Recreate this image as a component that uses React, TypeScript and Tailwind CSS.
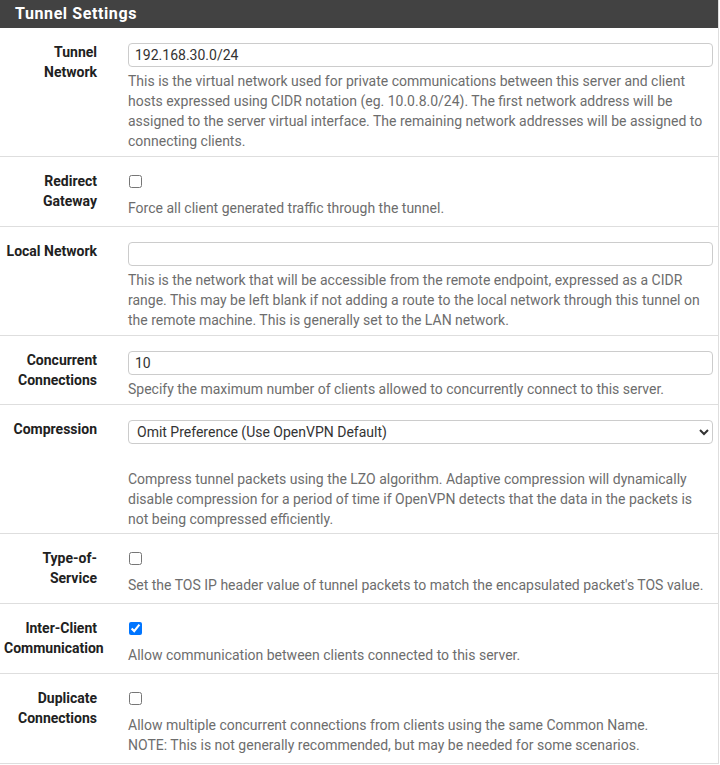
import { useState } from 'react';

type Row =
  | { kind: 'input'; label: string; value: string; help: string[] }
  | { kind: 'check'; label: string; checked: boolean; help: string[] }
  | { kind: 'select'; label: string; value: string; help: string[] };

const rows: Row[] = [
  {
    kind: 'input',
    label: 'Tunnel Network',
    value: '192.168.30.0/24',
    help: [
      'This is the virtual network used for private communications between this server and client hosts expressed using CIDR notation (eg. 10.0.8.0/24). The first network address will be assigned to the server virtual interface. The remaining network addresses will be assigned to connecting clients.',
    ],
  },
  {
    kind: 'check',
    label: 'Redirect Gateway',
    checked: false,
    help: ['Force all client generated traffic through the tunnel.'],
  },
  {
    kind: 'input',
    label: 'Local Network',
    value: '',
    help: [
      'This is the network that will be accessible from the remote endpoint, expressed as a CIDR range. This may be left blank if not adding a route to the local network through this tunnel on the remote machine. This is generally set to the LAN network.',
    ],
  },
  {
    kind: 'input',
    label: 'Concurrent Connections',
    value: '10',
    help: ['Specify the maximum number of clients allowed to concurrently connect to this server.'],
  },
  {
    kind: 'select',
    label: 'Compression',
    value: 'Omit Preference (Use OpenVPN Default)',
    help: [
      'Compress tunnel packets using the LZO algorithm. Adaptive compression will dynamically disable compression for a period of time if OpenVPN detects that the data in the packets is not being compressed efficiently.',
    ],
  },
  {
    kind: 'check',
    label: 'Type-of-Service',
    checked: false,
    help: ["Set the TOS IP header value of tunnel packets to match the encapsulated packet's TOS value."],
  },
  {
    kind: 'check',
    label: 'Inter-Client Communication',
    checked: true,
    help: ['Allow communication between clients connected to this server.'],
  },
  {
    kind: 'check',
    label: 'Duplicate Connections',
    checked: false,
    help: [
      'Allow multiple concurrent connections from clients using the same Common Name.',
      'NOTE: This is not generally recommended, but may be needed for some scenarios.',
    ],
  },
];

function Field({ row }: { row: Row }) {
  const [val, setVal] = useState(row.kind === 'check' ? '' : row.value);
  const [checked, setChecked] = useState(row.kind === 'check' ? row.checked : false);

  return (
    <div className="flex border-b border-[#dedede]">
      <div className="w-[112px] shrink-0 pl-[4px] pr-[15px] pt-[14px] text-right text-[14px] font-bold leading-[20px] text-[#212121]">
        {row.label}
      </div>
      <div className="flex-1 pl-[16px] pr-[5px] pt-[14px] text-[14px] leading-[20px] text-[#6d6d6d]">
        {row.kind === 'input' && (
          <>
            <input
              type="text"
              value={val}
              onChange={(e) => setVal(e.target.value)}
              className="mt-[1px] block h-[24px] w-full rounded-[4px] border border-[#cccccc] bg-white px-[6px] text-[14px] text-[#333333] outline-none"
            />
            <div className="mt-[4px] pb-[5px]">
              {row.help.map((h) => (
                <p key={h}>{h}</p>
              ))}
            </div>
          </>
        )}
        {row.kind === 'select' && (
          <>
            <select
              value={val}
              onChange={(e) => setVal(e.target.value)}
              className="mt-[1px] block h-[24px] w-full rounded-[4px] border border-[#cccccc] bg-white px-[4px] text-[14px] text-[#333333] outline-none"
            >
              <option>Omit Preference (Use OpenVPN Default)</option>
              <option>Disabled - No Compression</option>
              <option>Enabled with Adaptive Compression</option>
            </select>
            <div className="mt-[25px] pb-[4px]">
              {row.help.map((h) => (
                <p key={h}>{h}</p>
              ))}
            </div>
          </>
        )}
        {row.kind === 'check' && (
          <>
            <div className="flex h-[20px] items-center">
              <input
                type="checkbox"
                checked={checked}
                onChange={(e) => setChecked(e.target.checked)}
                className="ml-[1px] h-[13px] w-[13px]"
              />
            </div>
            <div className="mt-[7px] pb-[8px]">
              {row.help.map((h) => (
                <p key={h}>{h}</p>
              ))}
            </div>
          </>
        )}
      </div>
    </div>
  );
}

export default function App() {
  return (
    <main className="min-h-screen bg-white" style={{ fontFamily: 'Roboto, "Liberation Sans", sans-serif' }}>
      <div className="w-[719px] border-r border-[#dedede]">
        <div className="flex h-[28px] items-center bg-[#424242] pl-[15px] text-[16px] font-bold tracking-[0.6px] text-white">
          Tunnel Settings
        </div>
        {rows.map((r) => (
          <Field key={r.label} row={r} />
        ))}
      </div>
    </main>
  );
}
